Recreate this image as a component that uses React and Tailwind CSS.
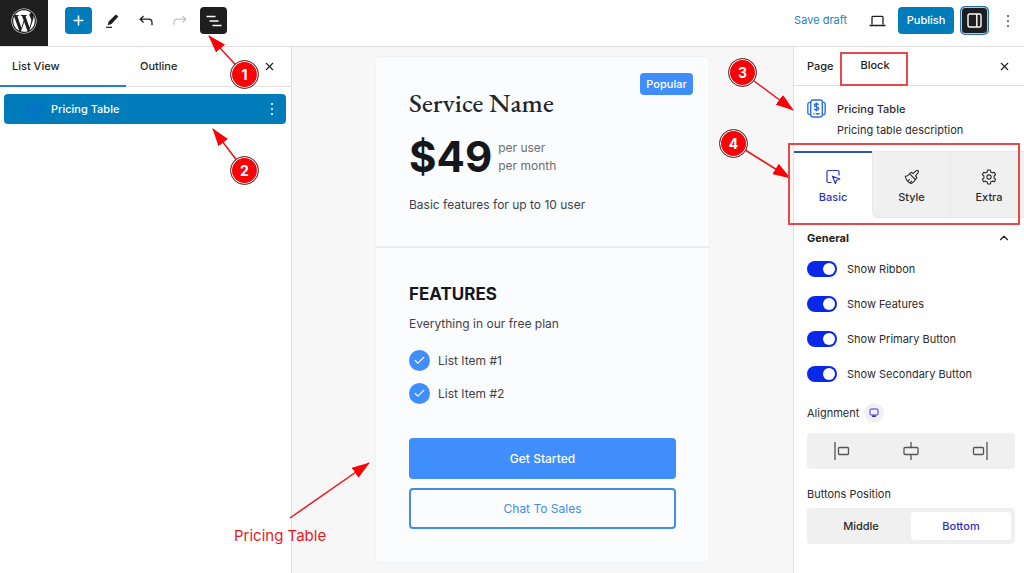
import { useState } from "react";
import { X, ChevronUp, Check, Plus } from "lucide-react";
import { FaWordpress } from "react-icons/fa";

const TOGGLES = ["Show Ribbon", "Show Features", "Show Primary Button", "Show Secondary Button"];

function PricingIcon({ className }) {
  return (
    <svg viewBox="0 0 18 18" className={className} fill="none" stroke="currentColor" strokeWidth="1.3">
      <rect x="3.5" y="1" width="11" height="16" rx="2" />
      <path d="M3.5 3.2H2.6A1.8 1.8 0 0 0 .8 5v8a1.8 1.8 0 0 0 1.8 1.8h.9M14.5 3.2h.9A1.8 1.8 0 0 1 17.2 5v8a1.8 1.8 0 0 1-1.8 1.8h-.9" />
      <path d="M11 5.5C10.6 4.8 9.9 4.5 9 4.5c-1.2 0-2 .6-2 1.5 0 2.1 4.1.9 4.1 3 0 .9-.9 1.500-2.1 1.500-1 0-1.800-.4-2.200-1.100M9 3.300v8.400" />
      <path d="M6 14h1M8.2 14h3.8" />
    </svg>
  );
}

function Dots({ className }) {
  return (
    <svg viewBox="0 0 4 14" className={className} fill="currentColor">
      <circle cx="2" cy="2" r="1.1" />
      <circle cx="2" cy="7" r="1.1" />
      <circle cx="2" cy="12" r="1.1" />
    </svg>
  );
}

function Header() {
  return (
    <header className="flex h-[47px] border-b border-[#e0e0e0] bg-white">
      <a href="#dashboard" aria-label="WordPress" className="flex h-[46px] w-12 items-start justify-center bg-[#1e1e1e] pt-2 text-white">
        <FaWordpress size={26} />
      </a>
      <div className="ml-[17px] flex items-start gap-[6px] pt-[7px] text-[#1e1e1e]">
        <button aria-label="Add block" className="flex size-[27px] items-center justify-center rounded-sm bg-[#007cba] text-white">
          <Plus size={15} strokeWidth={2.5} />
        </button>
        <button aria-label="Tools" className="flex h-[27px] w-7 items-center justify-center">
          <svg viewBox="0 0 14 14" className="size-[14px]">
            <path d="M10.8.4 13.400 2.600 6.500 9.900 2.600 11.300 3.700 7.500Z" fill="currentColor" />
            <path d="M1 13.300h6" stroke="currentColor" strokeWidth="1.2" />
          </svg>
        </button>
        <button aria-label="Undo" className="flex h-[27px] w-7 items-center justify-center">
          <svg viewBox="0 0 14 12" className="h-3 w-[14px]" fill="none" stroke="currentColor" strokeWidth="1.3">
            <path d="M4.5 1 1.2 4.2l3.3 3.3M1.2 4.2h8.3c2.2 0 3.5 1.3 3.5 3.5v2.5" />
          </svg>
        </button>
        <button aria-label="Redo" className="flex h-[27px] w-7 items-center justify-center text-[#c4c4c4]">
          <svg viewBox="0 0 14 12" className="h-3 w-[14px]" fill="none" stroke="currentColor" strokeWidth="1.3">
            <path d="M9.5 1l3.3 3.2-3.3 3.3M12.8 4.2H4.5C2.3 4.2 1 5.5 1 7.7v2.5" />
          </svg>
        </button>
        <button aria-label="Document overview" className="flex size-[27px] items-center justify-center rounded-sm bg-[#1e1e1e] text-white">
          <svg viewBox="0 0 16 12" className="h-3 w-4" stroke="currentColor" strokeWidth="1.5">
            <path d="M.5 1.5h9M3.5 6h9M6.5 10.5h9" />
          </svg>
        </button>
      </div>
      <div className="ml-auto flex items-start pt-[7px] pr-[14px]">
        <button className="mr-[22px] h-[27px] text-[11px] text-[#2a7fb8]">Save draft</button>
        <button aria-label="View" className="mr-3 flex h-[27px] items-center">
          <svg viewBox="0 0 17 12" className="h-3 w-[17px] text-[#1e1e1e]" fill="none" stroke="currentColor" strokeWidth="1.3">
            <path d="M3 9.5V2.3c0-.6.3-.9.9-.9h9.2c.6 0 .9.3.9.9v7.2M.5 10.5h16" />
          </svg>
        </button>
        <button className="mr-[7px] h-[27px] w-14 rounded-sm bg-[#007cba] text-[11px] font-medium text-white">Publish</button>
        <button aria-label="Settings" className="mr-[18px] flex size-[27px] items-center justify-center rounded-sm border border-[#a9cce8] bg-[#1e1e1e] text-white ring-1 ring-[#2472ad]">
          <svg viewBox="0 0 15 15" className="size-[15px]" fill="none" stroke="currentColor" strokeWidth="1.4">
            <rect x="1" y="1" width="13" height="13" rx="1.5" />
            <path d="M9.8 1v13" />
          </svg>
        </button>
        <button aria-label="Options" className="flex h-[27px] items-center text-[#555]">
          <Dots className="h-[14px] w-1" />
        </button>
      </div>
    </header>
  );
}

function ListViewPanel() {
  return (
    <aside className="w-[292px] shrink-0 border-r border-[#e0e0e0] bg-white">
      <div className="flex h-10 items-center border-b border-[#e0e0e0] text-[11px] font-medium">
        <button className="-mb-px h-10 w-[126px] border-b-2 border-[#2181c4] pl-3 text-left">List View</button>
        <button className="px-[14px]">Outline</button>
        <button aria-label="Close" className="mr-[15px] ml-auto">
          <X size={13} strokeWidth={2} />
        </button>
      </div>
      <div className="mr-[5px] ml-1 mt-[7px] flex h-[30px] items-center rounded-sm bg-[#007cba] pr-3 text-[11px] font-medium text-white">
        <PricingIcon className="mr-2 ml-[22px] size-[17px] text-[#0a6fd0]" />
        <a href="#pricing-table">Pricing Table</a>
        <button aria-label="Block options" className="ml-auto">
          <Dots className="h-[14px] w-1" />
        </button>
      </div>
    </aside>
  );
}

function PricingCard() {
  return (
    <article className="w-[335px] rounded-md border border-[#eff2f4] bg-[#fbfcfe] text-[12px] text-[#3f4347]">
      <div className="relative h-[191px] border-b-2 border-[#e9edf0] px-[33px] pt-[30px]">
        <span className="absolute top-4 right-4 flex h-[22px] w-[53px] items-center justify-center rounded-sm bg-[#3f8efc] text-[11px] font-medium text-white">
          Popular
        </span>
        <h2 className="font-['EB_Garamond','Liberation_Serif',serif] text-[27px] leading-8 font-medium text-[#23262a]">Service Name</h2>
        <div className="mt-3 flex items-center gap-[6px]">
          <strong className="text-[42px] leading-[52px] font-bold text-[#15171a]">$49</strong>
          <p className="leading-[18px] text-[#6b6f73]">
            per user
            <br />
            per month
          </p>
        </div>
        <p className="mt-3 leading-5">Basic features for up to 10 user</p>
      </div>
      <div className="px-[33px] pt-[34px] pb-[33px]">
        <h3 className="text-[17px] leading-6 font-bold text-[#15171a]">FEATURES</h3>
        <p className="mt-2 leading-5">Everything in our free plan</p>
        <ul className="mt-4 flex flex-col gap-3">
          {["List Item #1", "List Item #2"].map((item) => (
            <li key={item} className="flex items-center gap-2">
              <span className="flex size-[21px] items-center justify-center rounded-full bg-[#3f8efc] text-white">
                <Check size={13} strokeWidth={2} />
              </span>
              {item}
            </li>
          ))}
        </ul>
        <button className="mt-[34px] h-[41px] w-full rounded-sm bg-[#3f8efc] font-medium text-white">Get Started</button>
        <button className="mt-[9px] h-[41px] w-full rounded-sm border-2 border-[#3f8ee8] text-[#3f8ee8]">Chat To Sales</button>
      </div>
    </article>
  );
}

function SettingsPanel() {
  const [position, setPosition] = useState("Bottom");

  return (
    <aside className="w-[231px] shrink-0 overflow-hidden border-l border-[#e0e0e0] bg-white text-[11px] text-[#2c2c2c]">
      <div className="relative flex h-[39px] items-center border-b border-[#e0e0e0] px-[13px] font-medium text-[#1e1e1e]">
        <button>Page</button>
        <button className="ml-[14px] h-[39px] w-[55px] border-b border-[#333]">Block</button>
        <button aria-label="Close settings" className="ml-auto">
          <X size={13} strokeWidth={2} />
        </button>
        <span className="absolute top-[5px] left-[46px] h-[34px] w-[68px] border-2 border-[#e8484c]" />
      </div>

      <div className="flex gap-[11px] px-[13px] pt-[13px] pb-[10px]">
        <PricingIcon className="size-[19px] text-[#2a6fe0]" />
        <div>
          <h2 className="leading-5 font-medium">Pricing Table</h2>
          <p className="leading-[22px]">Pricing table description</p>
        </div>
      </div>

      <div className="flex h-[67px] leading-4">
        <button className="flex w-[78px] shrink-0 flex-col items-center gap-1 border-t-2 border-[#2f55b5] bg-white pt-4 font-medium text-[#2f35c0]">
          <svg viewBox="0 0 16 16" className="size-4" fill="none" stroke="currentColor" strokeWidth="1.2" strokeLinejoin="round">
            <path d="M6.5 13.5H3.2c-.8 0-1.2-.4-1.2-1.2V2.7c0-.8.4-1.2 1.2-1.2h9.6c.8 0 1.2.4 1.2 1.2v3.8" />
            <path d="M7.5 7.2 14.8 10l-3.2 1.2-1.3 3.3Z" />
          </svg>
          Basic
        </button>
        <button className="flex w-[78px] shrink-0 flex-col items-center gap-1 rounded-bl-md border border-r-0 border-[#e8e8e8] bg-[#f0f0f0] pt-[17px] font-medium">
          <svg viewBox="0 0 16 16" className="size-4" fill="none" stroke="currentColor" strokeWidth="1.1" strokeLinejoin="round">
            <path d="M9 4.5 12.3 1.7c1.4-.9 2.7.4 1.9 1.8L11.5 6.9l1 1.2c.5.6.4 1-.1 1.5l-1 .9L5.5 4.7l1-.9c.5-.5 1-.5 1.5 0Z" />
            <path d="M5.500 4.700C4.600 6.500 3.200 7.200 1.300 7.300c.7 3.600 2.500 6 6 7.300 1.700-1.100 3.300-2.300 4.100-4.100M4 11.800l1.700-1.500M6.200 13.700l1.800-1.700" />
          </svg>
          Style
        </button>
        <button className="flex w-[78px] shrink-0 flex-col items-center gap-1 border border-[#e8e8e8] bg-[#f0f0f0] pt-[17px] font-medium">
          <svg viewBox="0 0 16 16" className="size-4" fill="none" stroke="currentColor" strokeWidth="1.1" strokeLinejoin="round">
            <path d="M6.7 1h2.6l.5 2 1.5.9 2-.6 1.3 2.3L13.1 7v2l1.5 1.4-1.3 2.3-2-.6-1.5.9-.5 2H6.7l-.5-2-1.5-.9-2 .6-1.3-2.3L2.9 9V7L1.4 5.6l1.3-2.3 2 .6L6.2 3Z" />
            <circle cx="8" cy="8" r="2.1" />
          </svg>
          Extra
        </button>
      </div>

      <div className="px-[13px] pt-[10px]">
        <button className="flex h-5 w-full items-center justify-between font-bold text-[#1e1e1e]">
          General
          <ChevronUp size={14} strokeWidth={2} />
        </button>
        <div className="mt-[13px] flex flex-col gap-[19px]">
          {TOGGLES.map((label) => (
            <label key={label} className="flex h-4 items-center gap-[10px]">
              <input
                type="checkbox"
                defaultChecked
                className="flex h-4 w-[30px] appearance-none items-center rounded-full bg-[#b5b5b5] px-[2px] before:size-3 before:rounded-full before:bg-white checked:justify-end checked:bg-[#0a28e8]"
              />
              {label}
            </label>
          ))}
        </div>

        <div className="mt-[21px] flex items-center gap-[5px]">
          <span>Alignment</span>
          <button aria-label="Desktop" className="flex size-5 items-center justify-center rounded-full bg-[#f0f1f5] text-[#4630d0]">
            <svg viewBox="0 0 10 10" className="size-[10px]" fill="none" stroke="currentColor">
              <rect x="1" y="1" width="8" height="6" rx="1" />
              <path d="M3 8.2h4" strokeWidth="1.6" />
            </svg>
          </button>
        </div>
        <div className="mt-[10px] mr-[-4px] grid h-9 grid-cols-3 rounded-sm bg-[#f0f0f0] text-[#555]">
          <button aria-label="Align left" className="flex items-center justify-center">
            <svg viewBox="0 0 18 18" className="size-[18px]" fill="none" stroke="currentColor" strokeWidth="1.3">
              <path d="M2 0v18" />
              <rect x="5.5" y="5.5" width="10" height="7" rx="1" />
            </svg>
          </button>
          <button aria-label="Align center" className="flex items-center justify-center">
            <svg viewBox="0 0 18 18" className="size-[18px]" fill="none" stroke="currentColor" strokeWidth="1.3">
              <path d="M9 0v5.5M9 12.5V18" />
              <rect x="2" y="5.5" width="14" height="7" rx="1" />
            </svg>
          </button>
          <button aria-label="Align right" className="flex items-center justify-center">
            <svg viewBox="0 0 18 18" className="size-[18px]" fill="none" stroke="currentColor" strokeWidth="1.3">
              <path d="M16 0v18" />
              <rect x="2.5" y="5.5" width="10" height="7" rx="1" />
            </svg>
          </button>
        </div>

        <p className="mt-[15px] leading-5">Buttons Position</p>
        <div className="mt-1 mr-[-4px] grid h-9 grid-cols-2 rounded-sm bg-[#f0f0f0] p-1 font-medium">
          {["Middle", "Bottom"].map((name) => (
            <button
              key={name}
              onClick={() => setPosition(name)}
              className={position === name ? "rounded-sm bg-white text-[#2f2fc4]" : "rounded-sm"}
            >
              {name}
            </button>
          ))}
        </div>
      </div>
    </aside>
  );
}

// red arrow, the head is drawn at the end of the line
function Arrow({ x1, y1, x2, y2 }) {
  return <line x1={x1} y1={y1} x2={x2} y2={y2} stroke="#f01418" strokeWidth="1.5" markerEnd="url(#arrow-head)" />;
}

function Badge({ className, children }) {
  return (
    <span className={`absolute flex size-[29px] items-center justify-center rounded-full border border-[#444] bg-[#fb0007] text-[14px] font-bold text-white inset-ring inset-ring-white ${className}`}>
      {children}
    </span>
  );
}

function Notes() {
  return (
    <>
      <div className="pointer-events-none absolute top-0 left-0">
        <svg width="380" height="560" fill="none">
          <defs>
            <marker id="arrow-head" markerUnits="userSpaceOnUse" markerWidth="18" markerHeight="12" refX="17" refY="6" orient="auto">
              <path d="M0 0 18 6 0 12Z" fill="#fb0007" />
            </marker>
          </defs>
          <Arrow x1={244} y1={74} x2={209} y2={36} />
          <Arrow x1={244} y1={170} x2={213} y2={129} />
          <Arrow x1={290} y1={518} x2={369} y2={463} />
        </svg>
        <Badge className="top-[60px] left-[230px]">1</Badge>
        <Badge className="top-[156px] left-[230px]">2</Badge>
        <p className="absolute top-[526px] left-[234px] text-[15px] leading-5 whitespace-nowrap text-[#e8191d]">Pricing Table</p>
      </div>
      <div className="pointer-events-none absolute top-0 right-0">
        <svg width="324" height="240" fill="none">
          <Arrow x1={42} y1={72} x2={93} y2={110} />
          <Arrow x1={34} y1={143} x2={90} y2={178} />
        </svg>
        <Badge className="top-[58px] left-[28px]">3</Badge>
        <Badge className="top-[129px] left-[19px]">4</Badge>
        <span className="absolute top-[143px] left-[88px] h-[82px] w-[232px] border-2 border-[#e8484c]" />
      </div>
    </>
  );
}

export default function App() {
  return (
    <div className="relative flex min-h-screen flex-col overflow-hidden bg-white font-['Inter',sans-serif] text-[#1e1e1e]">
      <Header />
      <div className="flex flex-1">
        <ListViewPanel />
        <main className="flex flex-1 items-start justify-center bg-[#f7f7f7] pt-[9px] pb-[10px]">
          <PricingCard />
        </main>
        <SettingsPanel />
      </div>
      <Notes />
    </div>
  );
}
